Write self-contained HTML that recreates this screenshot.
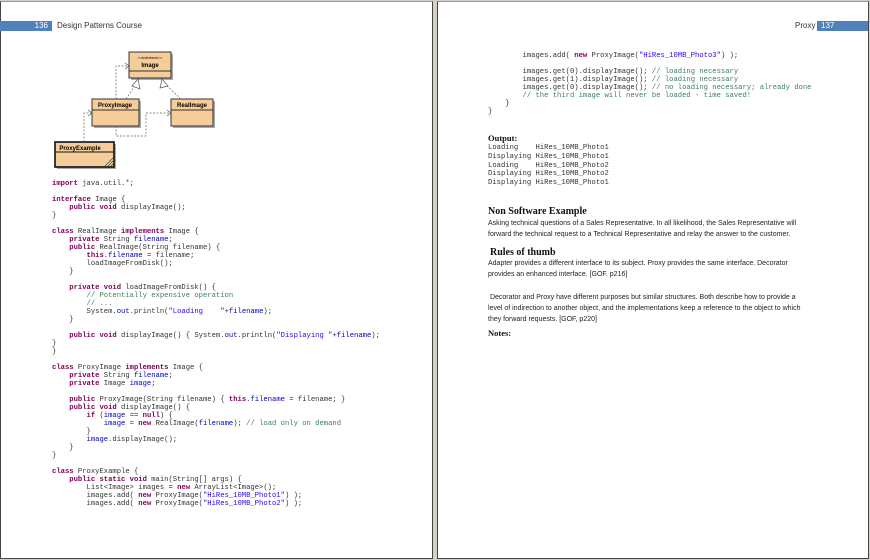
<!DOCTYPE html>
<html><head><meta charset="utf-8"><style>
*{margin:0;padding:0;box-sizing:border-box}
body{width:870px;height:560px;background:#d4d0c8;position:relative;overflow:hidden;font-family:"Liberation Sans",sans-serif}
.page{position:absolute;background:#fff;border:1px solid #444;border-top-color:#999}
.abs{position:absolute;white-space:pre}
.code{font-family:"Liberation Mono",monospace;font-size:7.2px;line-height:8px;color:#333;white-space:pre;position:absolute}
.k{color:#7f0055;font-weight:bold}
.f{color:#0000c0}
.s{color:#2a00ff}
.c{color:#3f7f5f}
.hd{font-family:"Liberation Serif",serif;font-weight:bold;font-size:10px;color:#111}
.tx{font-size:7px;line-height:11px;color:#222}
.bar{position:absolute;background:#4f81bd;color:#fff;font-size:8px;line-height:10px;height:10px}
</style></head><body>
<div class="page" style="left:0;top:1px;width:433px;height:558px"></div>
<div class="page" style="left:437px;top:1px;width:432px;height:558px"></div>

<div class="bar" style="left:0;top:21px;width:52px;text-align:right;padding-right:4px">136</div>
<div class="abs" style="left:57px;top:21px;font-size:8px;line-height:10px;color:#333">Design Patterns Course</div>

<svg class="abs" style="left:0;top:0" width="240" height="180">
<g font-family="Liberation Sans" font-weight="bold" font-size="6" fill="#000" text-anchor="middle">
<rect x="131" y="54" width="42" height="26" fill="#aaa"/>
<rect x="129" y="52" width="42" height="26" fill="#f5cd9a" stroke="#333" stroke-width="1"/>
<line x1="129" y1="71" x2="171" y2="71" stroke="#333"/>
<text x="150" y="59" font-size="4" font-weight="normal">&lt;&lt;interface&gt;&gt;</text>
<text x="150" y="67">Image</text>
<rect x="94" y="101" width="47" height="27" fill="#aaa"/>
<rect x="92" y="99" width="47" height="27" fill="#f5cd9a" stroke="#333"/>
<line x1="92" y1="110" x2="139" y2="110" stroke="#333"/>
<text x="115" y="107">ProxyImage</text>
<rect x="173" y="101" width="42" height="27" fill="#aaa"/>
<rect x="171" y="99" width="42" height="27" fill="#f5cd9a" stroke="#333"/>
<line x1="171" y1="110" x2="213" y2="110" stroke="#333"/>
<text x="192" y="107">RealImage</text>
<rect x="57" y="144" width="59" height="25" fill="#aaa"/>
<rect x="55" y="142" width="59" height="25" fill="#f5cd9a" stroke="#111" stroke-width="1.6"/>
<line x1="55" y1="152" x2="114" y2="152" stroke="#111"/>
<text x="80" y="150">ProxyExample</text>
<path d="M104 167 L114 157 M107 167 L114 160 M110 167 L114 163" stroke="#333" stroke-width=".6"/>
<g fill="none" stroke="#666" stroke-width=".7" stroke-dasharray="2 1.5">
<path d="M116 99 V66 H128"/>
<path d="M126 99 L136 84"/>
<path d="M181 99 L165 84"/>
<path d="M116 126 V136 H146 V113 H170"/>
<path d="M84 142 V113 H91"/>
</g>
<g fill="none" stroke="#555" stroke-width=".7">
<path d="M125 63 L129 66 L125 69"/>
<path d="M167 110 L171 113 L167 116"/>
<path d="M88 110 L92 113 L88 116"/>
<path d="M138 79 L132 86 L140 89 Z" fill="#fff"/>
<path d="M162 79 L160 88 L168 86 Z" fill="#fff"/>
</g>
</g></svg>

<div class="code" style="left:52px;top:180px"><span class="k">import</span> java.util.*;

<span class="k">interface</span> Image {
    <span class="k">public void</span> displayImage();
}

<span class="k">class</span> RealImage <span class="k">implements</span> Image {
    <span class="k">private</span> String <span class="f">filename</span>;
    <span class="k">public</span> RealImage(String filename) {
        <span class="k">this</span>.<span class="f">filename</span> = filename;
        loadImageFromDisk();
    }

    <span class="k">private void</span> loadImageFromDisk() {
        <span class="c">// Potentially expensive operation</span>
        <span class="c">// ...</span>
        System.<span class="f">out</span>.println(<span class="s">"Loading    "</span>+<span class="f">filename</span>);
    }

    <span class="k">public void</span> displayImage() { System.<span class="f">out</span>.println(<span class="s">"Displaying "</span>+<span class="f">filename</span>);
}
}

<span class="k">class</span> ProxyImage <span class="k">implements</span> Image {
    <span class="k">private</span> String <span class="f">filename</span>;
    <span class="k">private</span> Image <span class="f">image</span>;

    <span class="k">public</span> ProxyImage(String filename) { <span class="k">this</span>.<span class="f">filename</span> = filename; }
    <span class="k">public void</span> displayImage() {
        <span class="k">if</span> (<span class="f">image</span> == <span class="k">null</span>) {
            <span class="f">image</span> = <span class="k">new</span> RealImage(<span class="f">filename</span>); <span class="c">// load only on demand</span>
        }
        <span class="f">image</span>.displayImage();
    }
}

<span class="k">class</span> ProxyExample {
    <span class="k">public static void</span> main(String[] args) {
        List&lt;Image&gt; images = <span class="k">new</span> ArrayList&lt;Image&gt;();
        images.add( <span class="k">new</span> ProxyImage(<span class="s">"HiRes_10MB_Photo1"</span>) );
        images.add( <span class="k">new</span> ProxyImage(<span class="s">"HiRes_10MB_Photo2"</span>) );</div>

<div class="abs" style="left:795px;top:21px;font-size:8px;line-height:10px;color:#333">Proxy</div>
<div class="bar" style="left:817px;top:21px;width:51px;padding-left:4px">137</div>

<div class="code" style="left:488px;top:52px">        images.add( <span class="k">new</span> ProxyImage(<span class="s">"HiRes_10MB_Photo3"</span>) );

        images.get(0).displayImage(); <span class="c">// loading necessary</span>
        images.get(1).displayImage(); <span class="c">// loading necessary</span>
        images.get(0).displayImage(); <span class="c">// no loading necessary; already done</span>
        <span class="c">// the third image will never be loaded - time saved!</span>
    }
}</div>

<div class="abs hd" style="left:488px;top:133px;font-size:8.5px">Output:</div>
<div class="code" style="left:488px;top:144px;line-height:8.8px">Loading    HiRes_10MB_Photo1
Displaying HiRes_10MB_Photo1
Loading    HiRes_10MB_Photo2
Displaying HiRes_10MB_Photo2
Displaying HiRes_10MB_Photo1</div>

<div class="abs hd" style="left:488px;top:206px">Non Software Example</div>
<div class="abs tx" style="left:488px;top:218px">Asking technical questions of a Sales Representative. In all likelihood, the Sales Representative will
forward the technical request to a Technical Representative and relay the answer to the customer.</div>

<div class="abs hd" style="left:490px;top:247px">Rules of thumb</div>
<div class="abs tx" style="left:488px;top:258px">Adapter provides a different interface to its subject. Proxy provides the same interface. Decorator
provides an enhanced interface. [GOF. p216]</div>
<div class="abs tx" style="left:488px;top:292px"> Decorator and Proxy have different purposes but similar structures. Both describe how to provide a
level of indirection to another object, and the implementations keep a reference to the object to which
they forward requests. [GOF, p220]</div>

<div class="abs hd" style="left:488px;top:328px;font-size:8.5px">Notes:</div>
</body></html>
